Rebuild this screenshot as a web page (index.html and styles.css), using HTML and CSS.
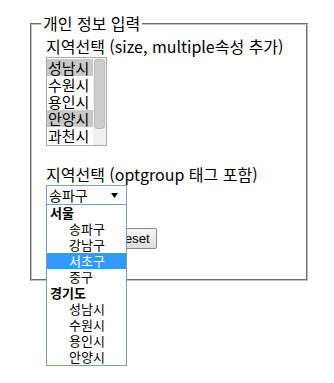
FILE: index.html
```html
<!DOCTYPE html>
<html lang="ko">
<head>
    <meta charset="UTF-8">
    <meta name="viewport" content="width=device-width, initial-scale=1.0">
    <title>select 연습</title>
    <link rel="stylesheet" href="styles.css">
</head>
<body>
    <form class="form" action="#">
        <fieldset class="box">
            <legend class="box-title">개인 정보 입력</legend>

            <p class="field-label">지역선택 (size, multiple속성 추가)</p>
            <div class="listbox">
                <ul class="listbox-items">
                    <li class="sel">성남시</li>
                    <li>수원시</li>
                    <li>용인시</li>
                    <li class="sel">안양시</li>
                    <li>과천시</li>
                </ul>
                <div class="scroll"><span class="thumb"></span></div>
            </div>

            <p class="field-label second">지역선택 (optgroup 태그 포함)</p>
            <div class="combo">
                <div class="combo-value">
                    <span>송파구</span>
                    <svg class="arrow" width="7" height="5" viewBox="0 0 7 5"><path d="M0 0h7L3.5 5z" fill="#000"/></svg>
                </div>
            </div>

            <div class="buttons">
                <button type="submit" class="btn">전송</button>
                <button type="reset" class="btn">Reset</button>
            </div>
        </fieldset>

        <ul class="combo-list">
            <li class="group">서울</li>
            <li class="opt">송파구</li>
            <li class="opt">강남구</li>
            <li class="opt hl">서초구</li>
            <li class="opt">중구</li>
            <li class="group">경기도</li>
            <li class="opt">성남시</li>
            <li class="opt">수원시</li>
            <li class="opt">용인시</li>
            <li class="opt">안양시</li>
        </ul>
    </form>
</body>
</html>
```

FILE: styles.css
```css
* {
    margin: 0;
    padding: 0;
    box-sizing: border-box;
}

html,
body {
    min-height: 383px;
}

body {
    font-family: "Noto Sans CJK KR", "DejaVu Sans", sans-serif;
    font-size: 16px;
    color: #000;
    background: #fff;
}

ul {
    list-style: none;
}

.form {
    position: relative;
    min-height: 383px;
    padding: 15px 26px 0 30px;
}

/* fieldset 테두리 */
.box {
    border: 2px groove #c0c0c0;
    padding: 6px 14px 30px;
}

.box-title {
    padding: 0 2px;
    margin-left: -5px;
    line-height: 17px;
}

.field-label {
    line-height: 17px;
}

.field-label.second {
    margin-top: 20px;
}

/* size, multiple 목록 */
.listbox {
    display: flex;
    width: 61px;
    height: 89px;
    margin-top: 2px;
    border: 1px solid #a9a9a9;
    font-size: 15px;
}

.listbox-items {
    flex: 1;
    overflow: hidden;
    padding-top: 1px;
    line-height: 17px;
}

.listbox-items li {
    padding-left: 1px;
}

.listbox-items .sel {
    background: #c8c8c8;
}

.scroll {
    width: 13px;
    padding: 1px 1px 0;
    background: #f0f0f0;
}

.thumb {
    display: block;
    height: 70px;
    background: #cdcdcd;
    border: 1px solid #bdbdbd;
    border-radius: 3px;
}

/* optgroup 드롭다운 */
.combo {
    width: 81px;
    margin-top: 2px;
    font-size: 14px;
}

.combo-value {
    display: flex;
    align-items: center;
    justify-content: space-between;
    height: 20px;
    padding: 0 8px 0 2px;
    border: 1px solid #7b9ed6;
    line-height: 18px;
}

.combo-list {
    position: absolute;
    top: 204px;
    left: 46px;
    width: 81px;
    border: 1px solid #7f9db9;
    background: #fff;
    font-size: 13px;
    z-index: 2;
}

.combo-list li {
    height: 16px;
    line-height: 16px;
}

.combo-list .group {
    padding-left: 3px;
    font-weight: bold;
}

.combo-list .opt {
    padding-left: 22px;
}

.combo-list .hl {
    background: #3399ff;
    color: #fff;
}

.buttons {
    display: flex;
    gap: 4px;
    margin-top: 23px;
}

.btn {
    height: 21px;
    padding: 0 6px;
    font-family: "Liberation Sans", Arial, sans-serif;
    font-size: 13.33px;
    border: 1px solid #8a8a8a;
    border-radius: 2px;
    background: linear-gradient(#f6f6f6, #dddddd);
}

.btn[type="submit"] {
    width: 58px;
}
```
